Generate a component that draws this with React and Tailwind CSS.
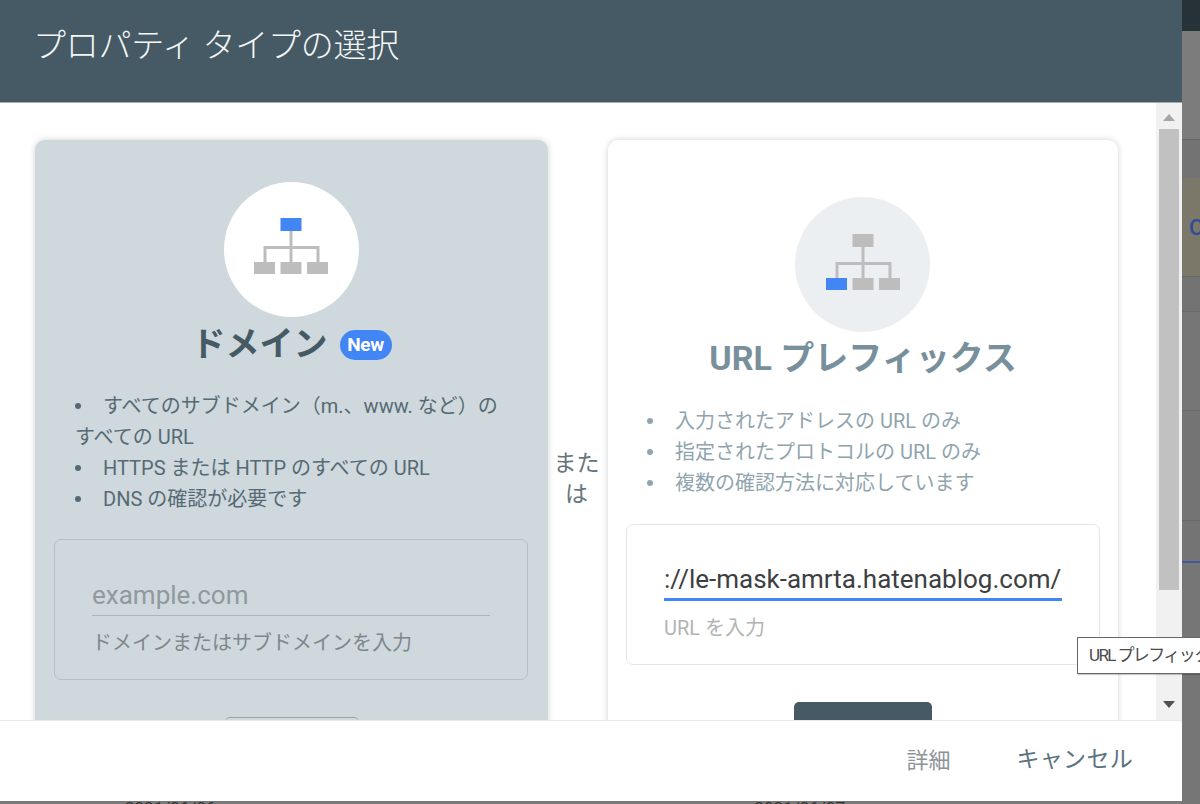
import React from "react";

function Hier({ blue, className }) {
  const g = "#bdbdbd";
  const b = "#4285f4";
  return (
    <svg width="74" height="56" viewBox="0 0 74 56" fill="none" className={className}>
      <path d="M37 13V44M11 44V29.5H64V44" stroke={g} strokeWidth="3" />
      <rect x="26.5" y="0" width="21" height="13" fill={blue === "top" ? b : g} />
      <rect x="0" y="44" width="21" height="12" fill={blue === "left" ? b : g} />
      <rect x="26.5" y="44" width="21" height="12" fill={g} />
      <rect x="53" y="44" width="21" height="12" fill={g} />
    </svg>
  );
}

function Item({ children }) {
  return (
    <li>
      <span className="mb-[3px] mr-[22px] inline-block h-[6px] w-[6px] rounded-full bg-current align-middle" />
      {children}
    </li>
  );
}

function Arrow({ up }) {
  return (
    <svg width="12" height="7" viewBox="0 0 12 7" className="block">
      <path d={up ? "M6 0L12 7H0Z" : "M0 0H12L6 7Z"} fill={up ? "#a6a6a6" : "#505050"} />
    </svg>
  );
}

export default function App() {
  return (
    <div className="relative flex h-[804px] w-[1200px] overflow-hidden bg-[#7a7a7a] font-['Roboto','Noto_Sans_CJK_JP',sans-serif]">
      <div className="flex w-[1182px] shrink-0 flex-col">
        <div className="flex h-[801px] shrink-0 flex-col bg-white">
          <header className="flex h-[103px] shrink-0 items-center border-b border-[#9fadb3] bg-[#455a64] pb-[10px] pl-[33px] text-[33px] font-light tracking-[-0.25px] text-[#f4f6f7]">
            プロパティ タイプの選択
          </header>

          <div className="flex min-h-0 flex-1">
            <div className="flex min-w-0 flex-1 items-start overflow-hidden pl-[35px] pt-[37px]">
              <section className="flex h-[640px] w-[513px] shrink-0 flex-col items-center rounded-[10px] bg-[#cfd8dc] pt-[42px] shadow-[0_0_6px_rgba(0,0,0,0.18)]">
                <div className="mr-[1px] flex h-[135px] w-[135px] items-center justify-center rounded-full bg-white">
                  <Hier blue="top" className="mb-[7px]" />
                </div>
                <div className="mt-[7px] flex h-[40px] items-center gap-[12px]">
                  <h2 className="text-[34px] font-bold leading-[40px] text-[#455a64]">ドメイン</h2>
                  <span className="mt-[2px] flex h-[30px] w-[52px] items-center justify-center rounded-[15px] bg-[#4285f4] text-[19px] font-bold tracking-[-0.4px] text-white">New</span>
                </div>
                <ul className="mt-[27px] self-start pl-[40px] text-[20px] leading-[31px] text-[#566a74]">
                  <Item>すべてのサブドメイン（m.、www. など）の<br />すべての URL</Item>
                  <Item>HTTPS または HTTP のすべての URL</Item>
                  <Item>DNS の確認が必要です</Item>
                </ul>
                <div className="ml-[19px] mt-[24px] h-[141px] w-[474px] shrink-0 self-start rounded-[7px] border border-[#b5c0c5] px-[37px] pt-[35px]">
                  <input
                    readOnly
                    placeholder="example.com"
                    className="block h-[41px] w-[398px] border-b border-[#aab4b9] bg-transparent pb-[1px] text-[26px] text-[#333] outline-none placeholder:text-[#8f999e]"
                  />
                  <p className="mt-[12px] text-[20px] leading-[30px] text-[#7e878c]">ドメインまたはサブドメインを入力</p>
                </div>
                <div className="mt-[37px] h-[40px] w-[134px] shrink-0 rounded-[5px] border-t border-[#9aa5ab]" />
              </section>

              <div className="flex w-[60px] shrink-0 self-stretch pr-[3px] pt-[308px] text-center text-[23px] leading-[31px] text-[#68757c]">
                <span className="mx-auto w-[47px] break-all">または</span>
              </div>

              <section className="flex h-[640px] w-[510px] shrink-0 flex-col items-center rounded-[10px] bg-white pt-[57px] shadow-[0_0_6px_rgba(0,0,0,0.18)]">
                <div className="mr-[1px] flex h-[135px] w-[135px] items-center justify-center rounded-full bg-[#eceff1]">
                  <Hier blue="left" className="mb-[6px]" />
                </div>
                <h2 className="mt-[6px] h-[40px] text-[34px] font-bold leading-[40px] text-[#78909c]">URL プレフィックス</h2>
                <ul className="mt-[28px] self-start pl-[39px] text-[20px] leading-[31px] text-[#90a4ae]">
                  <Item>入力されたアドレスの URL のみ</Item>
                  <Item>指定されたプロトコルの URL のみ</Item>
                  <Item>複数の確認方法に対応しています</Item>
                </ul>
                <div className="mt-[25px] h-[141px] w-[474px] shrink-0 rounded-[7px] border border-[#e4e7e9] px-[37px] pt-[34px]">
                  <input
                    readOnly
                    value="://le-mask-amrta.hatenablog.com/"
                    className="block h-[42px] w-[398px] border-b-[3px] border-[#4285f4] bg-transparent text-[26px] text-[#3c4043] outline-none"
                  />
                  <p className="mt-[12px] text-[20px] leading-[30px] text-[#b3b3b3]">URL を入力</p>
                </div>
                <div className="mt-[37px] h-[40px] w-[138px] shrink-0 rounded-[5px] bg-[#455a64]" />
              </section>
            </div>

            <div className="flex w-[26px] shrink-0 flex-col items-center bg-[#f1f1f1]">
              <div className="flex h-[26px] shrink-0 items-center justify-center pt-[2px]"><Arrow up /></div>
              <div className="h-[461px] w-[20px] shrink-0 bg-[#c1c1c1]" />
              <div className="flex flex-1 items-end justify-center pb-[12px]"><Arrow /></div>
            </div>
          </div>

          <footer className="flex h-[81px] shrink-0 items-center justify-end border-t border-[#e8e8e8] pb-[2px] pr-[49px] text-[23px]">
            <span className="text-[22px] text-[#8d9499]">詳細</span>
            <span className="ml-[66px] tracking-[0.3px] text-[#5b7380]">キャンセル</span>
          </footer>
        </div>
        <div className="flex h-[3px] overflow-hidden text-[17px] leading-[14px] text-[#333]">
          <span className="ml-[125px]">2021/06/06</span>
          <span className="ml-[539px]">2021/06/07</span>
        </div>
      </div>

      <div className="flex w-[18px] shrink-0 flex-col overflow-hidden">
        <div className="h-[31px] shrink-0 bg-[#263238]" />
        <div className="h-[108px] shrink-0 bg-[#7c7c7c]" />
        <div className="h-[39px] shrink-0 border-t border-[#666] bg-[#737373]" />
        <div className="flex h-[98px] shrink-0 items-center bg-[#7c7869] pl-[7px] text-[22px] font-medium text-[#2f4b9b]">C</div>
        <div className="h-[35px] shrink-0 border-t border-[#666] bg-[#727272]" />
        <div className="h-[99px] shrink-0 border-t border-[#6a6a6a] bg-[#767676]" />
        <div className="h-[110px] shrink-0 border-t border-[#6a6a6a] bg-[#747474]" />
        <div className="h-[41px] shrink-0 border-t border-[#6a6a6a] bg-[#747474]" />
        <div className="h-[2px] shrink-0 bg-[#3f5a9e]" />
        <div className="flex-1 bg-[#767676]" />
      </div>

      <div className="absolute left-[1077px] top-[637px] flex h-[37px] w-[160px] items-center whitespace-nowrap border border-[#666] bg-white pl-[11px] text-[17px] tracking-[-1.6px] text-[#4a4a4a] shadow-[1px_1px_1px_rgba(0,0,0,0.2)]">
        URL プレフィックス
      </div>
    </div>
  );
}
